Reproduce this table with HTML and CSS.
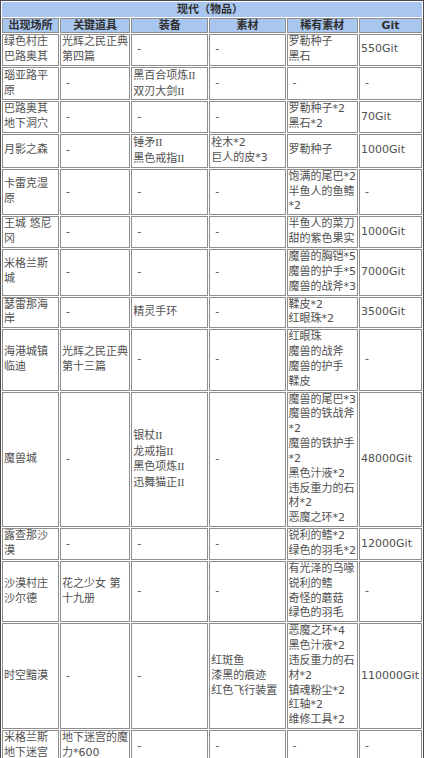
FILE: index.html
```html
<!DOCTYPE html>
<html lang="zh-CN">
<head>
<meta charset="utf-8">
<title>现代（物品）</title>
<link rel="stylesheet" href="styles.css">
</head>
<body>
<table class="items">
  <thead>
    <tr><th class="title" colspan="6">现代（物品）</th></tr>
    <tr>
      <th class="c1">出现场所</th>
      <th class="c2">关键道具</th>
      <th class="c3">装备</th>
      <th class="c4">素材</th>
      <th class="c5">稀有素材</th>
      <th class="c6">Git</th>
    </tr>
  </thead>
  <tbody>
    <tr>
      <td>绿色村庄巴路奥其</td>
      <td>光辉之民正典第四篇</td>
      <td class="e">-</td>
      <td class="e">-</td>
      <td>罗勒种子<br>黑石</td>
      <td>550Git</td>
    </tr>
    <tr>
      <td>瑙亚路平原</td>
      <td class="e">-</td>
      <td>黑百合项炼<span class="rn">II</span><br>双刃大剑<span class="rn">II</span></td>
      <td class="e">-</td>
      <td class="e">-</td>
      <td class="e">-</td>
    </tr>
    <tr>
      <td>巴路奥其地下洞穴</td>
      <td class="e">-</td>
      <td class="e">-</td>
      <td class="e">-</td>
      <td>罗勒种子*2<br>黑石*2</td>
      <td>70Git</td>
    </tr>
    <tr>
      <td>月影之森</td>
      <td class="e">-</td>
      <td>锤矛<span class="rn">II</span><br>黑色戒指<span class="rn">II</span></td>
      <td>栓木*2<br>巨人的皮*3</td>
      <td>罗勒种子</td>
      <td>1000Git</td>
    </tr>
    <tr>
      <td>卡雷克湿原</td>
      <td class="e">-</td>
      <td class="e">-</td>
      <td class="e">-</td>
      <td>饱满的尾巴*2<br>半鱼人的鱼鳍*2</td>
      <td class="e">-</td>
    </tr>
    <tr>
      <td>王城 悠尼冈</td>
      <td class="e">-</td>
      <td class="e">-</td>
      <td class="e">-</td>
      <td>半鱼人的菜刀<br>甜的紫色果实</td>
      <td>1000Git</td>
    </tr>
    <tr>
      <td>米格兰斯城</td>
      <td class="e">-</td>
      <td class="e">-</td>
      <td class="e">-</td>
      <td>魔兽的胸铠*5<br>魔兽的护手*5<br>魔兽的战斧*3</td>
      <td>7000Git</td>
    </tr>
    <tr>
      <td>瑟雷那海岸</td>
      <td class="e">-</td>
      <td>精灵手环</td>
      <td class="e">-</td>
      <td>鞣皮*2<br>红眼珠*2</td>
      <td>3500Git</td>
    </tr>
    <tr>
      <td>海港城镇临迪</td>
      <td>光辉之民正典第十三篇</td>
      <td class="e">-</td>
      <td class="e">-</td>
      <td>红眼珠<br>魔兽的战斧<br>魔兽的护手<br>鞣皮</td>
      <td class="e">-</td>
    </tr>
    <tr>
      <td>魔兽城</td>
      <td class="e">-</td>
      <td>银杖<span class="rn">II</span><br>龙戒指<span class="rn">II</span><br>黑色项炼<span class="rn">II</span><br>迅舞猫正<span class="rn">II</span></td>
      <td class="e">-</td>
      <td>魔兽的尾巴*3<br>魔兽的铁战斧*2<br>魔兽的铁护手*2<br>黑色汁液*2<br>违反重力的石材*2<br>恶魔之环*2</td>
      <td>48000Git</td>
    </tr>
    <tr>
      <td>露查那沙漠</td>
      <td class="e">-</td>
      <td class="e">-</td>
      <td class="e">-</td>
      <td>锐利的鳍*2<br>绿色的羽毛*2</td>
      <td>12000Git</td>
    </tr>
    <tr>
      <td>沙漠村庄沙尔德</td>
      <td>花之少女 第十九册</td>
      <td class="e">-</td>
      <td class="e">-</td>
      <td>有光泽的乌喙<br>锐利的鳍<br>奇怪的蘑菇<br>绿色的羽毛</td>
      <td class="e">-</td>
    </tr>
    <tr>
      <td>时空黯漠</td>
      <td class="e">-</td>
      <td class="e">-</td>
      <td>红斑鱼<br>漆黑的痕迹<br>红色飞行装置</td>
      <td>恶魔之环*4<br>黑色汁液*2<br>违反重力的石材*2<br>镇魂粉尘*2<br>红轴*2<br>维修工具*2</td>
      <td>110000Git</td>
    </tr>
    <tr>
      <td>米格兰斯地下迷宫</td>
      <td>地下迷宫的魔力*600</td>
      <td class="e">-</td>
      <td class="e">-</td>
      <td class="e">-</td>
      <td class="e">-</td>
    </tr>
  </tbody>
</table>
</body>
</html>
```

FILE: styles.css
```css
html, body {
  margin: 0;
  padding: 0;
  background: #ffffff;
}

.items {
  width: 424px;
  border-collapse: separate;
  border-spacing: 1px;
  border: 1px solid #4a4a4a;
  background: #ffffff;
  font-family: "DejaVu Sans", "Noto Sans CJK SC", sans-serif;
  font-size: 11px;
  line-height: 14.85px;
  color: #505050;
}

.items th,
.items td {
  border: 1px solid #8e8e8e;
  padding: 0 0 0 1px;
  vertical-align: middle;
  word-break: normal;
}

.items td {
  text-align: left;
  background: #ffffff;
}

.items td.e {
  padding-left: 5px;
}

.items th {
  background: #a9c6ef;
  color: #2f2f2f;
  font-weight: bold;
  text-align: center;
  line-height: 13px;
  padding: 0;
}

.items th.title {
  border-color: #a9c6ef;
  padding-right: 4px;
}

.c1 { width: 57px; }
.c2 { width: 70px; }
.c3 { width: 78px; }
.c4 { width: 77px; }
.c5 { width: 72px; }
.c6 { width: 61px; }

.rn {
  font-family: "Liberation Serif", serif;
}
```
